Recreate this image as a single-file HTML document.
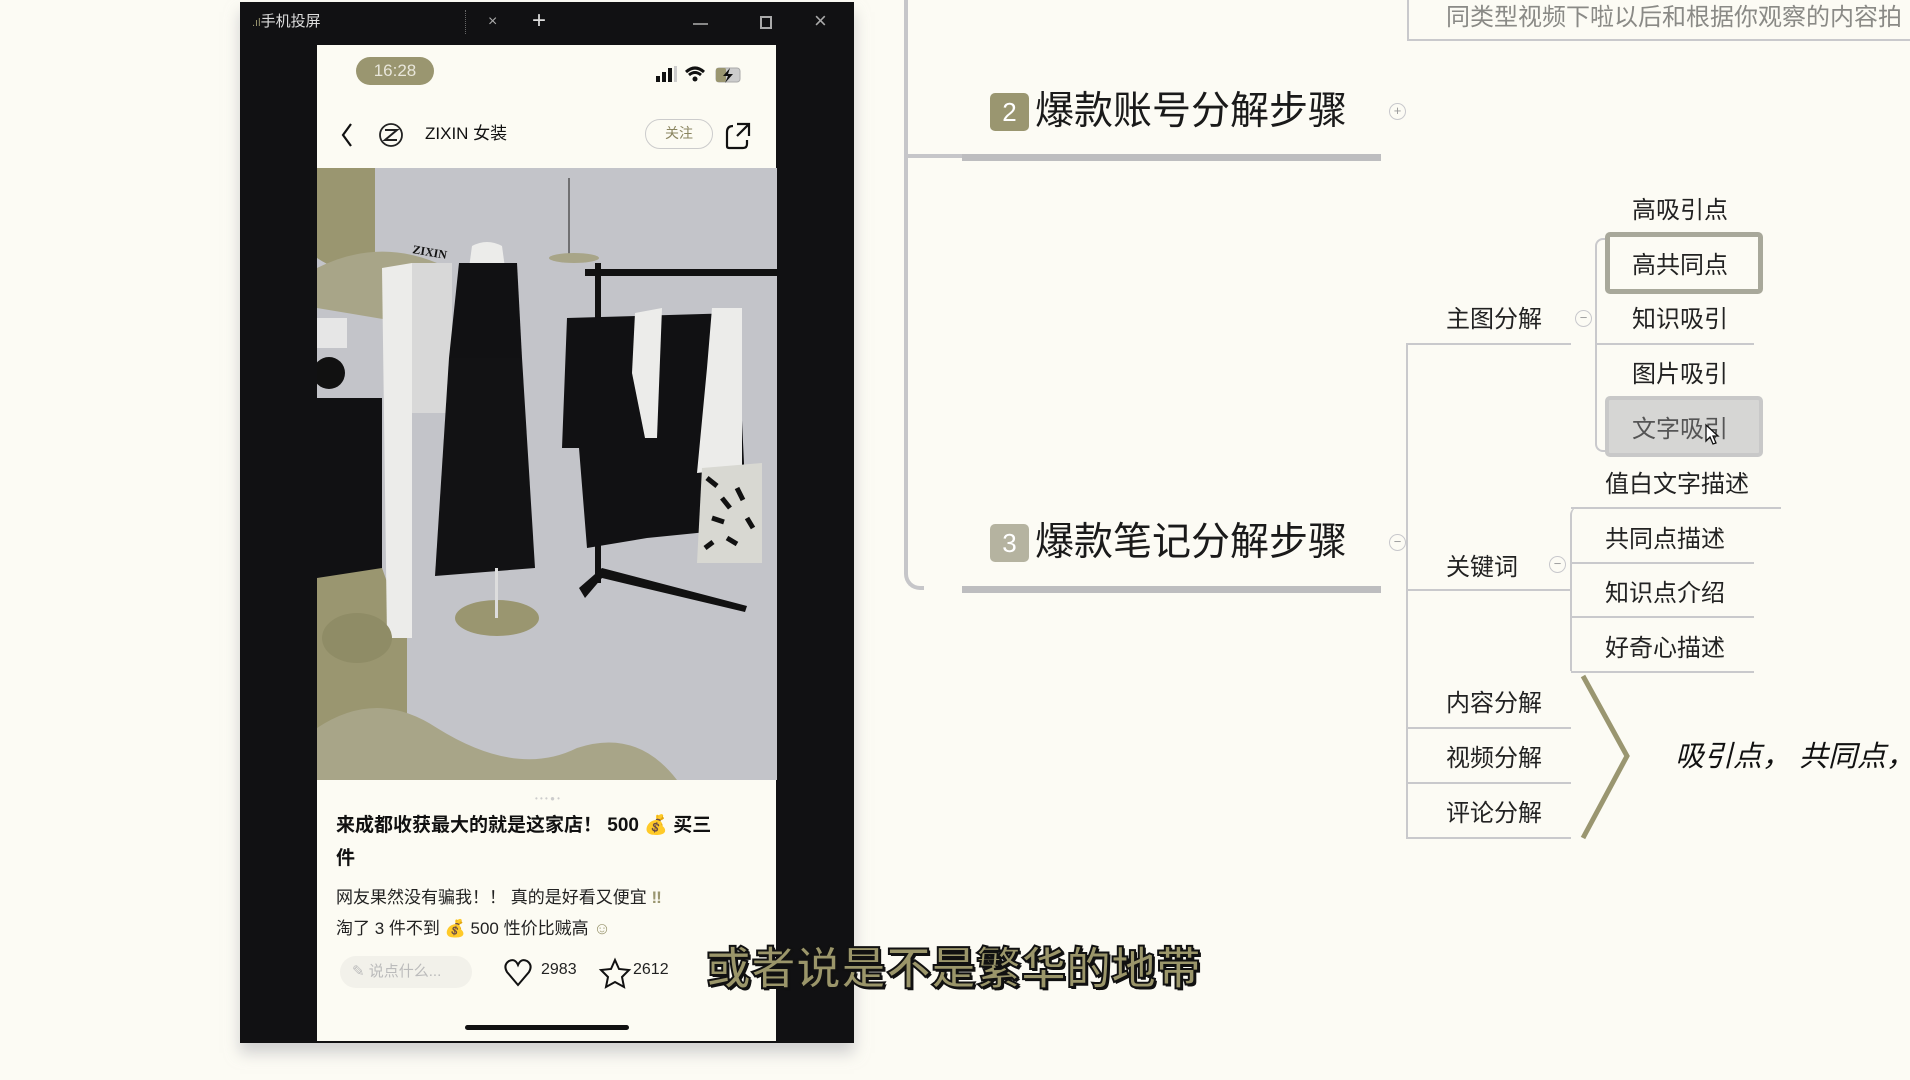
<!DOCTYPE html>
<html><head><meta charset="utf-8">
<style>
*{margin:0;padding:0;box-sizing:border-box}
body{width:1910px;height:1080px;background:#fcfbf4;position:relative;overflow:hidden;font-family:"Liberation Sans","Noto Sans CJK SC",sans-serif}
.a{position:absolute}
.t{position:absolute;white-space:nowrap;line-height:1}
.mm{color:#222;font-size:24px}
.ul{position:absolute;height:2px;background:#c9c9cc}
</style></head><body>

<!-- window -->
<div class="a" style="left:240px;top:2px;width:614px;height:1041px;background:#111113;box-shadow:0 10px 14px rgba(180,180,185,.6)"></div>
<div class="t" style="left:252px;top:14px;color:#ddd;font-size:15px"><span style="color:#9a9670;font-size:11px">.ıl</span>手机投屏</div>
<div class="t" style="left:488px;top:14px;color:#aaa;font-size:16px">×</div>
<div class="a" style="left:465px;top:10px;width:1px;height:24px;border-left:1px dotted #666"></div>
<div class="t" style="left:532px;top:9px;color:#ddd;font-size:24px">+</div>
<div class="a" style="left:693px;top:23px;width:15px;height:2px;background:#888"></div>
<div class="a" style="left:760px;top:16px;width:12px;height:13px;border:2px solid #aaa"></div>
<div class="t" style="left:814px;top:10px;color:#aaa;font-size:22px">×</div>

<!-- phone screen -->
<div class="a" style="left:317px;top:45px;width:459px;height:996px;background:#fcfbf3"></div>
<div class="t" style="left:356px;top:57px;width:78px;height:28px;border-radius:14px;background:#9a9670;color:#e8e6da;font-size:17px;line-height:28px;text-align:center">16:28</div>
<svg class="a" style="left:650px;top:64px" width="100" height="22">
<rect x="6" y="12" width="4" height="6" fill="#111"/><rect x="12" y="8" width="4" height="10" fill="#111"/><rect x="18" y="4" width="4" height="14" fill="#111"/><rect x="24" y="2" width="3" height="16" fill="#ccc"/>
<path d="M36 8 Q45 0 54 8" stroke="#111" stroke-width="3" fill="none"/><path d="M39 11 Q45 6 51 11" stroke="#111" stroke-width="3" fill="none"/><circle cx="45" cy="15" r="2.5" fill="#111"/>
<rect x="66" y="4" width="24" height="14" rx="3" fill="#ccc" stroke="#aaa"/><rect x="66" y="4" width="10" height="14" rx="2" fill="#9a9670"/><path d="M80 4 L73 12 L78 12 L75 19 L83 10 L78 10 Z" fill="#111"/>
</svg>
<svg class="a" style="left:335px;top:120px" width="420" height="36">
<path d="M16 4 L8 15 L16 26" stroke="#111" stroke-width="2.2" fill="none"/>
<circle cx="56" cy="15" r="11" stroke="#222" stroke-width="1.8" fill="none"/><path d="M50 10 L62 10 L50 20 L62 20" stroke="#222" stroke-width="2" fill="none"/>
<path d="M402 4 L414 4 L414 16 M414 4 L402 16" stroke="#111" stroke-width="2.2" fill="none"/><path d="M398 6 Q392 6 392 12 L392 26 Q392 28 394 28 L408 28 Q412 28 412 24 L412 20" stroke="#111" stroke-width="2.2" fill="none"/>
</svg>
<div class="t" style="left:425px;top:125px;font-size:17px;color:#111">ZIXIN 女装</div>
<div class="t" style="left:645px;top:119px;width:68px;height:30px;border:1.5px solid #ccc;border-radius:15px;font-size:14px;color:#8a8560;line-height:27px;text-align:center">关注</div>

<!-- photo -->
<svg class="a" style="left:317px;top:168px" width="460" height="612" viewBox="0 0 460 612">
<rect width="460" height="612" fill="#c3c4c9"/>
<path d="M0 0 L58 0 L58 100 Q30 110 0 90 Z" fill="#9a9670"/>
<path d="M0 100 Q60 70 120 95 L120 160 Q60 150 0 140 Z" fill="#a8a588"/>
<path d="M0 230 L65 230 L65 410 L0 410 Z" fill="#111113"/>
<rect x="0" y="150" width="30" height="30" fill="#e6e6e6"/>
<circle cx="12" cy="205" r="16" fill="#111"/>
<path d="M0 410 L65 400 L90 470 L90 612 L0 612 Z" fill="#9a9670"/>
<path d="M65 100 L95 95 L95 470 L70 470 Z" fill="#ececea"/>
<rect x="95" y="95" width="40" height="150" fill="#d8d8d8"/>
<text x="95" y="85" font-size="12" font-family="Liberation Serif" font-weight="bold" fill="#111" transform="rotate(10 95 85)">ZIXIN</text>
<path d="M155 78 Q170 70 185 78 L188 100 L152 100 Z" fill="#ececea"/>
<path d="M142 95 L200 95 L205 190 L132 190 Z" fill="#111113"/>
<path d="M132 190 L205 190 L218 400 L118 408 Z" fill="#121214"/>
<ellipse cx="180" cy="450" rx="42" ry="18" fill="#9a9670"/>
<rect x="178" y="400" width="3" height="50" fill="#ddd"/>
<line x1="252" y1="91" x2="252" y2="10" stroke="#555" stroke-width="1.5"/>
<ellipse cx="257" cy="90" rx="25" ry="5" fill="#a8a588"/>
<rect x="268" y="101" width="192" height="7" fill="#111"/>
<rect x="278" y="95" width="6" height="320" fill="#111"/>
<path d="M262 420 L285 400 L430 438 L428 444 L285 410 L268 430 Z" fill="#111"/>
<path d="M250 150 L420 145 L430 360 L330 370 L270 380 L262 280 L245 280 Z" fill="#111113"/>
<path d="M318 145 L345 140 L340 270 L328 270 L315 205 Z" fill="#ececea"/>
<path d="M395 140 L425 140 L425 300 L380 305 L390 200 Z" fill="#ececea"/>
<path d="M385 300 L445 295 L445 395 L380 395 Z" fill="#d8d8d2"/>
<path d="M390 310 l10 8 M405 330 l8 10 M395 350 l12 4 M420 320 l6 12 M410 370 l10 6 M388 380 l8 -6 M430 350 l6 10" stroke="#111" stroke-width="5"/>
<path d="M0 560 Q60 520 120 560 Q200 610 260 580 Q320 560 360 612 L0 612 Z" fill="#a8a588"/>
<ellipse cx="40" cy="470" rx="35" ry="25" fill="#8f8c66"/>
</svg>

<!-- caption -->
<div class="t" style="left:535px;top:795px;color:#ccc;font-size:8px">• • • ● •</div>
<div class="t" style="left:336px;top:816px;font-size:19px;font-weight:bold;color:#111">来成都收获最大的就是这家店！ 500 <span style="color:#9a9670">💰</span> 买三</div>
<div class="t" style="left:336px;top:849px;font-size:19px;font-weight:bold;color:#111">件</div>
<div class="t" style="left:336px;top:889px;font-size:17px;color:#222">网友果然没有骗我！！ 真的是好看又便宜 <span style="color:#9a9670;font-weight:bold">‼</span></div>
<div class="t" style="left:336px;top:920px;font-size:17px;color:#222">淘了 3 件不到 <span style="color:#9a9670">💰</span> 500 性价比贼高 <span style="color:#9a9670">☺</span></div>
<div class="t" style="left:340px;top:956px;width:132px;height:32px;border-radius:16px;background:#f2f1ea;color:#bbb;font-size:15px;line-height:32px;padding-left:12px">✎ 说点什么...</div>
<svg class="a" style="left:503px;top:957px" width="200" height="32">
<path d="M15 28 L4 15 Q0 8 6 4 Q12 1 15 8 Q18 1 24 4 Q30 8 26 15 Z" stroke="#111" stroke-width="2" fill="none"/>
<path d="M112 3 L116 12 L126 13 L119 20 L121 30 L112 25 L103 30 L105 20 L98 13 L108 12 Z" stroke="#111" stroke-width="2" fill="none"/>
</svg>
<div class="t" style="left:541px;top:962px;font-size:16px;color:#222">2983</div>
<div class="t" style="left:633px;top:962px;font-size:16px;color:#222">2612</div>
<div class="a" style="left:465px;top:1025px;width:164px;height:5px;border-radius:3px;background:#111"></div>

<!-- mindmap -->
<div class="a" style="left:904px;top:0;width:20px;height:590px;border-left:4px solid #c6c6c9;border-bottom:4px solid #c6c6c9;border-bottom-left-radius:16px"></div>
<div class="a" style="left:904px;top:154px;width:58px;height:4px;background:#c6c6c9"></div>
<div class="a" style="left:962px;top:154px;width:419px;height:7px;background:#bdbdbf"></div>
<div class="a" style="left:962px;top:586px;width:419px;height:7px;background:#bdbdbf"></div>
<div class="a" style="left:1407px;top:0;width:503px;height:41px;border-left:2px solid #c9c9cc;border-bottom:2px solid #c9c9cc"></div>
<div class="t" style="left:1446px;top:6px;font-size:24px;color:#8a8a86">同类型视频下啦以后和根据你观察的内容拍</div>

<div class="t" style="left:990px;top:93px;width:39px;height:38px;background:#9a9670;border-radius:5px;color:#fff;font-size:26px;line-height:38px;text-align:center">2</div>
<div class="t" style="left:1035px;top:92px;font-size:39px;color:#1a1a1a">爆款账号分解步骤</div>
<div class="t" style="left:1389px;top:103px;width:17px;height:17px;border:1.5px solid #c8c8cc;border-radius:50%;font-size:13px;line-height:14px;text-align:center;color:#999">+</div>

<div class="t" style="left:990px;top:524px;width:39px;height:38px;background:#b5b3a0;border-radius:5px;color:#fff;font-size:26px;line-height:38px;text-align:center">3</div>
<div class="t" style="left:1035px;top:523px;font-size:39px;color:#1a1a1a">爆款笔记分解步骤</div>
<div class="t" style="left:1389px;top:534px;width:17px;height:17px;border:1.5px solid #c8c8cc;border-radius:50%;font-size:13px;line-height:13px;text-align:center;color:#999">−</div>

<div class="a" style="left:1406px;top:343px;width:2px;height:495px;background:#c9c9cc"></div>
<div class="ul" style="left:1406px;top:343px;width:165px"></div>
<div class="ul" style="left:1406px;top:589px;width:165px"></div>
<div class="ul" style="left:1406px;top:727px;width:165px"></div>
<div class="ul" style="left:1406px;top:782px;width:165px"></div>
<div class="ul" style="left:1406px;top:837px;width:165px"></div>
<div class="t mm" style="left:1446px;top:308px">主图分解</div>
<div class="t mm" style="left:1446px;top:556px">关键词</div>
<div class="t mm" style="left:1446px;top:692px">内容分解</div>
<div class="t mm" style="left:1446px;top:747px">视频分解</div>
<div class="t mm" style="left:1446px;top:802px">评论分解</div>
<div class="t" style="left:1575px;top:310px;width:17px;height:17px;border:1.5px solid #c8c8cc;border-radius:50%;font-size:13px;line-height:13px;text-align:center;color:#999">−</div>
<div class="t" style="left:1549px;top:556px;width:17px;height:17px;border:1.5px solid #c8c8cc;border-radius:50%;font-size:13px;line-height:13px;text-align:center;color:#999">−</div>

<div class="a" style="left:1595px;top:238px;width:12px;height:214px;border-left:2px solid #c9c9cc;border-top:2px solid #c9c9cc;border-bottom:2px solid #c9c9cc;border-radius:8px 0 0 8px"></div>
<div class="ul" style="left:1596px;top:343px;width:158px"></div>
<div class="t mm" style="left:1632px;top:199px">高吸引点</div>
<div class="a" style="left:1605px;top:232px;width:158px;height:62px;border:5px solid #a8a89a;border-radius:5px;background:#fcfbf4"></div>
<div class="t mm" style="left:1632px;top:254px">高共同点</div>
<div class="t mm" style="left:1632px;top:308px">知识吸引</div>
<div class="t mm" style="left:1632px;top:363px">图片吸引</div>
<div class="a" style="left:1605px;top:396px;width:158px;height:61px;border:4px solid #c8c8c8;border-radius:5px;background:#d6d6d4"></div>
<div class="t mm" style="left:1632px;top:418px;color:#555">文字吸引</div>
<svg class="a" style="left:1704px;top:423px" width="16" height="24"><path d="M2 2 L2 18 L6 14 L9 21 L12 20 L9 13 L14 13 Z" fill="#fff" stroke="#111" stroke-width="1.3"/></svg>

<div class="t mm" style="left:1605px;top:473px">值白文字描述</div>
<div class="ul" style="left:1571px;top:507px;width:210px"></div>
<div class="a" style="left:1570px;top:507px;width:10px;height:164px;border-left:2px solid #c9c9cc;border-radius:8px 0 0 0"></div>
<div class="t mm" style="left:1605px;top:528px">共同点描述</div>
<div class="ul" style="left:1571px;top:562px;width:183px"></div>
<div class="t mm" style="left:1605px;top:582px">知识点介绍</div>
<div class="ul" style="left:1571px;top:616px;width:183px"></div>
<div class="t mm" style="left:1605px;top:637px">好奇心描述</div>
<div class="ul" style="left:1571px;top:671px;width:183px"></div>

<svg class="a" style="left:1575px;top:670px" width="60" height="175"><path d="M8 6 L52 86 L8 168" stroke="#9a9670" stroke-width="5" fill="none"/></svg>
<div class="t" style="left:1675px;top:743px;font-size:29px;font-style:italic;color:#111">吸引点，  共同点，</div>

<!-- subtitle -->
<div class="t" style="left:706px;top:946px;font-size:45px;font-weight:bold;color:#9b966a;-webkit-text-stroke:2px #111;text-shadow:2px 2px 0 #111">或者说是不是繁华的地带</div>
</body></html>
